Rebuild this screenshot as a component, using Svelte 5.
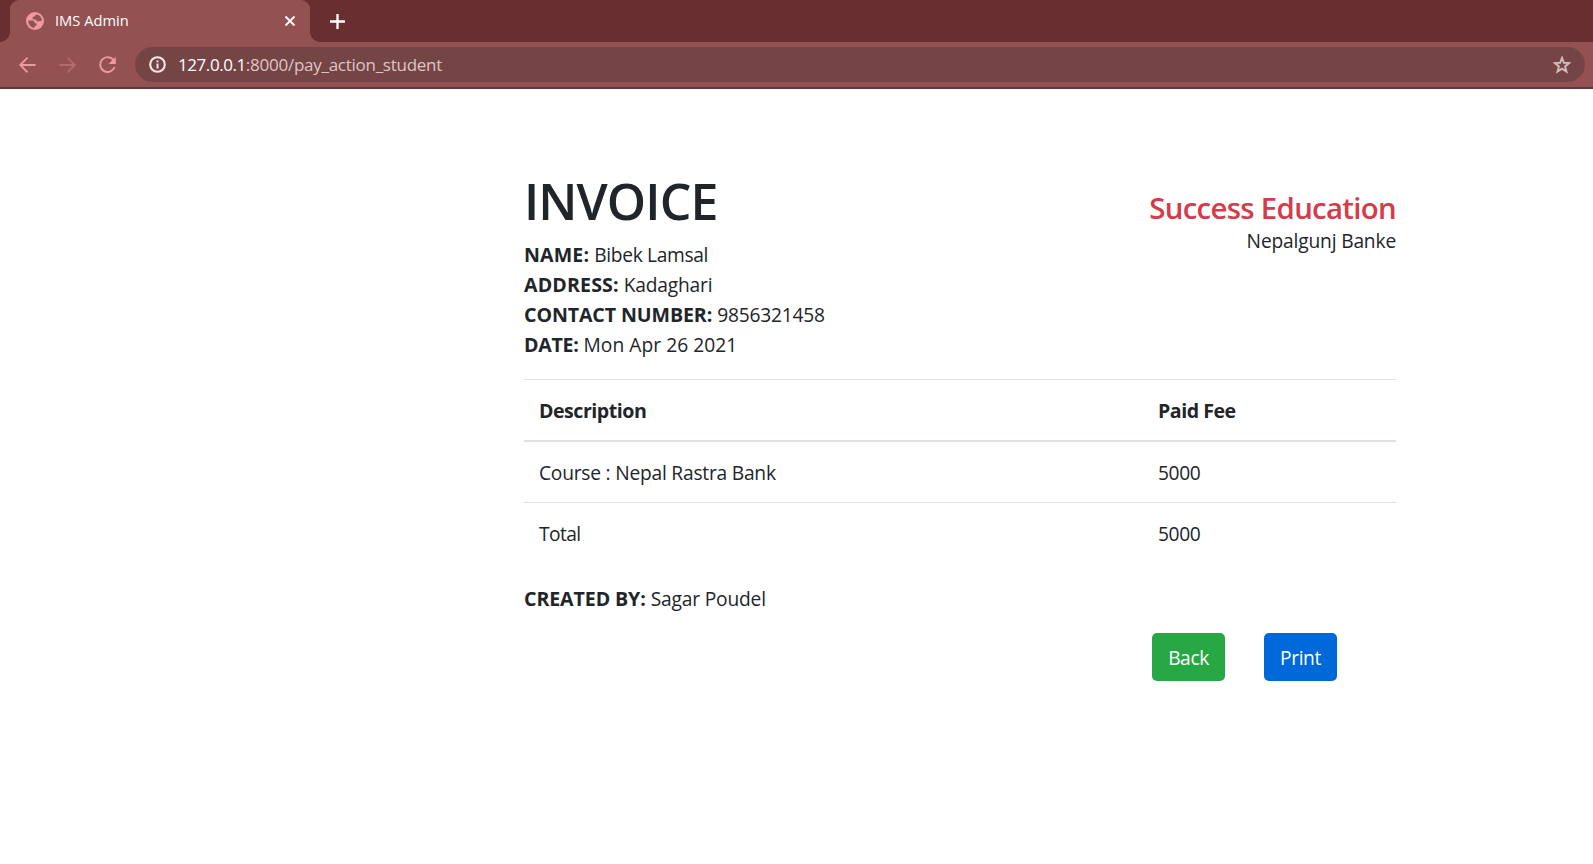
<script>
  const details = [
    { label: 'NAME:', value: 'Bibek Lamsal', labelTrack: 0.15, track: -0.34 },
    { label: 'ADDRESS:', value: 'Kadaghari', labelTrack: 0.14, track: -0.2 },
    { label: 'CONTACT NUMBER:', value: '9856321458', labelTrack: -0.1, track: -0.2 },
    { label: 'DATE:', value: 'Mon Apr 26 2021', labelTrack: -0.28, track: 0.05 }
  ];
  const lines = [
    { text: 'Course : Nepal Rastra Bank', fee: '5000', track: -0.22 },
    { text: 'Total', fee: '5000', track: -0.6 }
  ];
</script>

{#snippet field(d)}
  <div class="field">
    <strong style:letter-spacing="{d.labelTrack}px">{d.label}</strong>
    <span class="value" style:letter-spacing="{d.track}px">{d.value}</span>
  </div>
{/snippet}

<div class="window">
  <header>
    <div class="tabstrip">
      <div class="tab">
        <svg class="favicon" width="18" height="18" viewBox="0 0 18 18">
          <circle cx="9" cy="9" r="9" fill="#ec9a9c" />
          <path d="M2.2 8.6 H6.2 C8 8.6 8.8 9.6 8.8 11.2 H10.6 V13.2 C9 13.4 8.6 14.2 8.4 16 A7 7 0 0 1 2.2 8.6 Z" fill="#945152" />
          <path d="M11.2 2.4 C9.4 2.8 8.8 3.6 8.8 4.6 C7.4 4.6 6.6 5.2 6.6 6.4 C6.6 7.4 7.6 7.4 9.4 7.4 C10.4 7.4 10.4 9.2 11.4 9.4 C12.8 9.6 13.2 9 15.8 9 A7 7 0 0 0 11.2 2.4 Z" fill="#945152" />
        </svg>
        <span class="title">IMS Admin</span>
        <svg class="close" width="12" height="12" viewBox="0 0 12 12">
          <path d="M1.5 1.5 L10.5 10.5 M10.5 1.5 L1.5 10.5" stroke="#fff" stroke-width="1.8" />
        </svg>
      </div>
      <svg class="plus" width="15" height="15" viewBox="0 0 15 15">
        <path d="M7.5 0 V15 M0 7.5 H15" stroke="#fff" stroke-width="2.3" />
      </svg>
    </div>
    <div class="toolbar">
      <svg class="nav" width="18" height="18" viewBox="0 0 18 18" fill="none" stroke="#ec9a9c" stroke-width="1.8">
        <path d="M16.5 9 H1.5 M8.5 1.7 L1.2 9 L8.5 16.3" />
      </svg>
      <svg class="nav" width="18" height="18" viewBox="0 0 18 18" fill="none" stroke="#b56b6d" stroke-width="1.8">
        <path d="M.5 9 H15.5 M8.5 1.7 L15.8 9 L8.5 16.3" />
      </svg>
      <svg class="nav" width="18" height="18" viewBox="0 0 18 18" fill="none">
        <path d="M14.8 4.5 A7.4 7.4 0 1 0 15.6 11" stroke="#ec9a9c" stroke-width="1.9" />
        <path d="M16.8 .8 V8 H9.6 Z" fill="#ec9a9c" />
      </svg>
      <div class="address">
        <svg width="17" height="17" viewBox="0 0 17 17" fill="none">
          <circle cx="8.5" cy="8.5" r="7.3" stroke="#f9e6e6" stroke-width="2.1" />
          <path d="M8.5 7.6 V12.6 M8.5 4.4 V6.2" stroke="#f9e6e6" stroke-width="2" />
        </svg>
        <div class="url"><span class="host">127.0.0.1</span><span class="path">:8000/pay_action_student</span></div>
        <svg class="star" width="18" height="18" viewBox="0 0 18 18">
          <path d="M9 1.9 L10.9 6.8 L16.2 7.1 L12.1 10.4 L13.5 15.6 L9 12.7 L4.5 15.6 L5.9 10.4 L1.8 7.1 L7.1 6.8 Z" fill="none" stroke="#cfbcbc" stroke-width="1.9" />
        </svg>
      </div>
    </div>
  </header>

  <main>
    <div class="top">
      <section>
        <h1>INVOICE</h1>
        {#each details as d}{@render field(d)}{/each}
      </section>
      <section class="company">
        <h2>Success Education</h2>
        <div class="place">Nepalgunj Banke</div>
      </section>
    </div>

    <table>
      <thead>
        <tr><th class="desc">Description</th><th>Paid Fee</th></tr>
      </thead>
      <tbody>
        {#each lines as l}
          <tr>
            <td><span style:letter-spacing="{l.track}px">{l.text}</span></td>
            <td class="fee">{l.fee}</td>
          </tr>
        {/each}
      </tbody>
    </table>

    {@render field({ label: 'CREATED BY:', value: 'Sagar Poudel', labelTrack: -0.1, track: -0.18 })}

    <div class="actions">
      <button class="back">Back</button>
      <button class="print">Print</button>
    </div>
  </main>
</div>

<style>
  :global(body) { margin: 0; background: #fff; }
  .window {
    height: 864px;
    overflow: hidden;
    font: 400 19.6px/30px "Open Sans", "Noto Sans", sans-serif;
    color: #212529;
  }
  svg { display: block; flex: none; }

  .tabstrip {
    display: flex;
    align-items: center;
    height: 42px;
    padding-left: 10px;
    background: #692e2f;
  }
  .tab {
    position: relative;
    display: flex;
    align-items: center;
    box-sizing: border-box;
    width: 300px;
    height: 42px;
    padding: 0 14px 0 16px;
    border-radius: 9px 9px 0 0;
    background: #945152;
  }
  .tab::before, .tab::after {
    content: "";
    position: absolute;
    bottom: 0;
    width: 10px;
    height: 10px;
  }
  .tab::before { left: -10px; background: radial-gradient(circle at 0 0, transparent 9.5px, #945152 10px); }
  .tab::after { right: -10px; background: radial-gradient(circle at 100% 0, transparent 9.5px, #945152 10px); }
  .title {
    flex: 1;
    margin-left: 11px;
    padding-bottom: 2px;
    font-size: 14.7px;
    line-height: 20px;
    color: #fff;
  }
  .plus { margin-left: 20px; }

  .toolbar {
    display: flex;
    align-items: center;
    box-sizing: border-box;
    height: 47px;
    padding: 0 8px 0 19px;
    border-bottom: 2px solid #643638;
    background: #945152;
  }
  .nav { margin-right: 22px; }
  .address {
    display: flex;
    flex: 1;
    align-items: center;
    box-sizing: border-box;
    height: 35px;
    margin-left: -4px;
    padding: 0 14px;
    border-radius: 18px;
    background: #754445;
  }
  .url {
    flex: 1;
    margin-left: 12px;
    font-size: 17px;
    line-height: 24px;
    white-space: pre;
  }
  .host { color: #fff; letter-spacing: -0.43px; }
  .path { color: #dfc6c6; letter-spacing: -0.26px; }

  main { width: 872px; margin: 80px 0 0 524px; }
  .top { display: flex; justify-content: space-between; }
  h1 {
    margin: 0 0 8px;
    padding-top: 2px;
    font-size: 50px;
    font-weight: 600;
    line-height: 60px;
    letter-spacing: -0.9px;
  }
  .field {
    display: flex;
    align-items: baseline;
    gap: 5px;
    padding-top: 2px;
    line-height: 28px;
    white-space: nowrap;
  }
  strong { font-weight: 700; }
  .value, td, .place { font-size: 19.2px; }
  .company { padding-top: 21px; text-align: right; }
  h2 {
    margin: 0;
    font-size: 29.4px;
    font-weight: 600;
    line-height: 36px;
    letter-spacing: -0.7px;
    color: #d73a49;
  }
  .place { letter-spacing: -0.17px; }

  table {
    width: 100%;
    margin: 20px 0;
    border-collapse: separate;
    border-spacing: 0;
  }
  th, td { padding: 16px 15px 14px; text-align: left; }
  th {
    border-top: 1px solid #dee2e6;
    border-bottom: 2px solid #dee2e6;
    font-weight: 700;
    letter-spacing: -0.49px;
  }
  tbody tr + tr td { border-top: 1px solid #dee2e6; }
  .desc { width: 589px; }
  .fee { letter-spacing: -0.35px; }

  .actions { display: flex; gap: 39px; margin: 20px 0 0 628px; }
  button {
    width: 73px;
    height: 48px;
    padding: 2px 0 0;
    border: 0;
    border-radius: 5px;
    font: inherit;
    font-size: 19.2px;
    letter-spacing: -0.4px;
    color: #fff;
  }
  .back { background: #28a745; }
  .print { background: #0069d9; }
</style>
